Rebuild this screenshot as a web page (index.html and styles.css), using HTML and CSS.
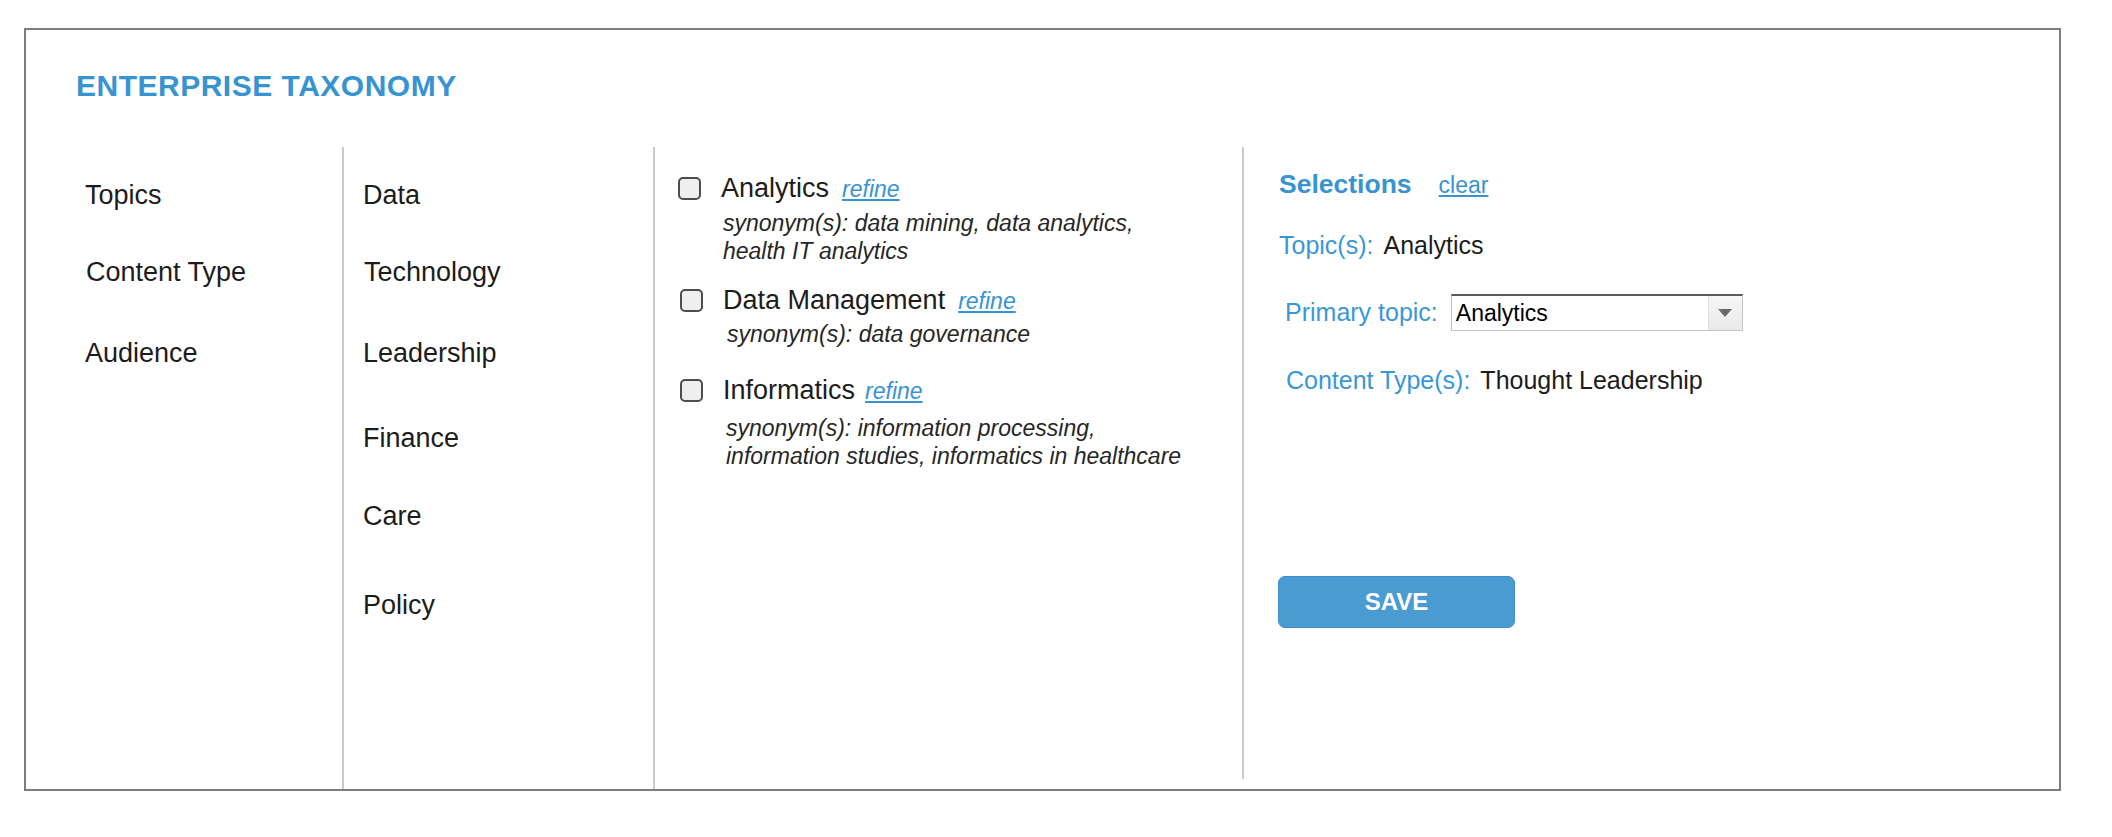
FILE: index.html
```html
<!DOCTYPE html>
<html lang="en">
<head>
<meta charset="utf-8">
<title>Enterprise Taxonomy</title>
<link rel="stylesheet" href="styles.css">
</head>
<body>
<div class="panel">
  <h1 class="title">ENTERPRISE TAXONOMY</h1>
  <div class="columns">
    <ul class="col col-cats">
      <li>Topics</li>
      <li>Content Type</li>
      <li>Audience</li>
    </ul>
    <ul class="col col-sub">
      <li>Data</li>
      <li>Technology</li>
      <li>Leadership</li>
      <li>Finance</li>
      <li>Care</li>
      <li>Policy</li>
    </ul>
    <div class="col col-terms">
      <div class="term">
        <span class="checkbox"></span>
        <div class="term-body">
          <div class="term-head"><span class="term-name">Analytics</span><a class="refine" href="#">refine</a></div>
          <div class="syn">synonym(s): data mining, data analytics,<br>health IT analytics</div>
        </div>
      </div>
      <div class="term">
        <span class="checkbox"></span>
        <div class="term-body">
          <div class="term-head"><span class="term-name">Data Management</span><a class="refine" href="#">refine</a></div>
          <div class="syn">synonym(s): data governance</div>
        </div>
      </div>
      <div class="term">
        <span class="checkbox"></span>
        <div class="term-body">
          <div class="term-head"><span class="term-name">Informatics</span><a class="refine" href="#">refine</a></div>
          <div class="syn">synonym(s): information processing,<br>information studies, informatics in healthcare</div>
        </div>
      </div>
    </div>
    <div class="col col-sel">
      <div class="sel-head"><span class="sel-title">Selections</span><a class="clear" href="#">clear</a></div>
      <div class="sel-row sel-topics"><span class="sel-label">Topic(s):</span><span class="sel-value">Analytics</span></div>
      <div class="sel-row sel-primary">
        <span class="sel-label">Primary topic:</span>
        <div class="select"><span class="select-text">Analytics</span><span class="select-arrow"><span class="tri"></span></span></div>
      </div>
      <div class="sel-row sel-ctype"><span class="sel-label">Content Type(s):</span><span class="sel-value">Thought Leadership</span></div>
      <button class="save">SAVE</button>
    </div>
  </div>
</div>
</body>
</html>
```

FILE: styles.css
```css
* { box-sizing: border-box; }

html, body {
  margin: 0;
  padding: 0;
  background: #ffffff;
}

body {
  font-family: "Liberation Sans", Arial, sans-serif;
  color: #1c1c1c;
}

.panel {
  margin: 28px 0 0 24px;
  width: 2037px;
  height: 763px;
  border: 2px solid #7d7d7d;
  display: flex;
  flex-direction: column;
  background: #fff;
}

.title {
  margin: 0;
  padding: 41px 0 0 50px;
  font-size: 30px;
  line-height: 30px;
  letter-spacing: 0.5px;
  font-weight: bold;
  color: #3893d1;
}

.columns {
  margin-top: 46px;
  flex: 1;
  display: flex;
}

.col {
  margin: 0;
  list-style: none;
}

.col-cats,
.col-sub {
  padding-top: 35px;
  border-right: 2px solid #c9c9c9;
}

.col-cats {
  width: 318px;
  padding-left: 59px;
}

.col-sub {
  width: 311px;
  padding-left: 19px;
}

.col-cats li,
.col-sub li {
  font-size: 27px;
  line-height: 26px;
  height: 26px;
  white-space: nowrap;
}

.col-cats li:nth-child(2) { margin-top: 51px; padding-left: 1px; }
.col-cats li:nth-child(3) { margin-top: 55px; }

.col-sub li:nth-child(2) { margin-top: 51px; padding-left: 1px; }
.col-sub li:nth-child(3) { margin-top: 55px; }
.col-sub li:nth-child(4) { margin-top: 59px; }
.col-sub li:nth-child(5) { margin-top: 52px; }
.col-sub li:nth-child(6) { margin-top: 63px; }

.col-terms {
  width: 587px;
  padding: 28px 0 0 23px;
}

.term {
  display: flex;
  align-items: flex-start;
}

.term:nth-child(2) { margin-top: 22px; }
.term:nth-child(3) { margin-top: 29px; }

.checkbox {
  width: 23px;
  height: 23px;
  margin-top: 2px;
  margin-right: 20px;
  border: 2px solid #4d4d4d;
  border-radius: 5px;
  background: #efefef;
  flex: none;
}

.term:nth-child(n+2) .checkbox { margin-left: 2px; }

.term-head {
  display: flex;
  align-items: baseline;
  height: 26px;
}

.term-name {
  font-size: 27px;
  line-height: 26px;
}

.refine {
  margin-left: 13px;
  font-size: 23px;
  font-style: italic;
  color: #3893d1;
  text-decoration: underline;
}

.term:nth-child(3) .refine { margin-left: 10px; }

.syn {
  margin-top: 8px;
  padding-left: 2px;
  font-size: 23px;
  line-height: 28px;
  font-style: italic;
  color: #262626;
  white-space: nowrap;
}

.term:nth-child(2) .syn { margin-top: 7px; padding-left: 4px; }
.term:nth-child(3) .syn { margin-top: 11px; padding-left: 3px; }

.col-sel {
  flex: 1;
  margin-bottom: 10px;
  border-left: 2px solid #c9c9c9;
  padding: 24px 0 0 35px;
  display: flex;
  flex-direction: column;
  align-items: flex-start;
}

.sel-head {
  display: flex;
  align-items: baseline;
  height: 26px;
}

.sel-title {
  font-size: 26.5px;
  line-height: 26px;
  font-weight: bold;
  color: #3893d1;
}

.clear {
  margin-left: 27px;
  font-size: 23px;
  color: #3893d1;
  text-decoration: underline;
}

.sel-row {
  display: flex;
  align-items: center;
  font-size: 25px;
  line-height: 25px;
  white-space: nowrap;
}

.sel-label {
  color: #3a97d6;
}

.sel-value {
  margin-left: 10px;
  color: #1c1c1c;
}

.sel-topics { margin-top: 36px; }

.sel-primary {
  margin-top: 36px;
  padding-left: 6px;
}

.sel-ctype {
  margin-top: 37px;
  padding-left: 7px;
}

.select {
  margin-left: 13px;
  width: 292px;
  height: 37px;
  display: flex;
  align-items: stretch;
  border: 1px solid #c4c4c4;
  border-top: 2px solid #5a5a5a;
  background: #fff;
}

.select-text {
  flex: 1;
  padding-left: 4px;
  font-size: 23px;
  line-height: 34px;
  color: #000;
}

.select-arrow {
  width: 34px;
  display: flex;
  align-items: center;
  justify-content: center;
  background: linear-gradient(#f6f6f6, #e9e9e9);
  border-left: 1px solid #e0e0e0;
}

.tri {
  width: 0;
  height: 0;
  border-left: 7px solid transparent;
  border-right: 7px solid transparent;
  border-top: 8px solid #6a6a6a;
}

.save {
  margin-top: 183px;
  margin-left: -1px;
  width: 237px;
  height: 52px;
  padding: 0;
  border: 1px solid #3f8fc8;
  border-radius: 7px;
  background: #4a9bd1;
  color: #ffffff;
  font-family: "Liberation Sans", Arial, sans-serif;
  font-size: 24px;
  font-weight: bold;
  cursor: pointer;
}
```
